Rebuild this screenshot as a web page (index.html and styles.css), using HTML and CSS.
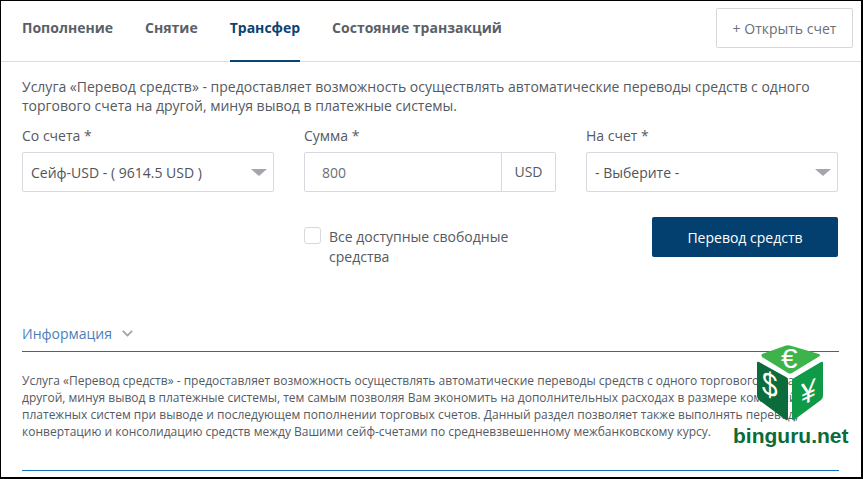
FILE: index.html
```html
<!DOCTYPE html>
<html lang="ru">
<head>
    <meta charset="UTF-8">
    <title>Трансфер</title>
    <link rel="stylesheet" href="styles.css">
</head>
<body>
    <div class="window">
        <header class="tabs-bar">
            <nav class="tabs">
                <a class="tab">Пополнение</a>
                <a class="tab">Снятие</a>
                <a class="tab active">Трансфер</a>
                <a class="tab">Состояние транзакций</a>
            </nav>
            <button class="open-btn">+ Открыть счет</button>
        </header>
        <main class="content">
            <p class="intro">Услуга «Перевод средств» - предоставляет возможность осуществлять автоматические переводы средств с одного торгового счета на другой, минуя вывод в платежные системы.</p>
            <div class="form-row">
                <div class="field">
                    <label class="field-label">Со счета *</label>
                    <div class="select"><span>Сейф-USD - ( 9614.5 USD )</span><i class="caret"></i></div>
                </div>
                <div class="field">
                    <label class="field-label">Сумма *</label>
                    <div class="amount"><span class="amount-value">800</span><span class="amount-unit">USD</span></div>
                </div>
                <div class="field">
                    <label class="field-label">На счет *</label>
                    <div class="select"><span>- Выберите -</span><i class="caret"></i></div>
                </div>
            </div>
            <div class="form-row action-row">
                <div class="field"></div>
                <div class="field check-field">
                    <span class="checkbox"></span>
                    <span class="check-label">Все доступные свободные средства</span>
                </div>
                <div class="field"><button class="submit-btn">Перевод средств</button></div>
            </div>
            <section class="info">
                <div class="info-head">
                    <span>Информация</span>
                    <svg class="chevron" width="11" height="7" viewBox="0 0 13 8"><path d="M1 1l5.500 5.500L12 1" fill="none" stroke="#98a3b0" stroke-width="2"/></svg>
                </div>
                <p class="info-text">Услуга «Перевод средств» - предоставляет возможность осуществлять автоматические переводы средств с одного торгового счета на<br>другой, минуя вывод в платежные системы, тем самым позволяя Вам экономить на дополнительных расходах в размере комиссий<br>платежных систем при выводе и последующем пополнении торговых счетов. Данный раздел позволяет также выполнять перевод,<br>конвертацию и консолидацию средств между Вашими сейф-счетами по средневзвешенному межбанковскому курсу.</p>
            </section>
        </main>
        <div class="watermark">
            <svg class="cube" width="70" height="80" viewBox="0 0 70 80">
                <path d="M6 11L30 2.500Q32 2 34 2.500L63 11Q65 12 63 13.500L36 30Q34 31 32 30L6 14Q5 12 6 11Z" fill="#3cb44b"/>
                <path d="M1 20Q1 18 3 19L30 34Q32 35 32 37V75Q32 78 30 77L3 57Q1 55 1 53Z" fill="#0b6b3a"/>
                <path d="M67 20Q67 18 65 19L38 35Q36 36 36 38V75Q36 78 38 77L65 57Q67 55 67 53Z" fill="#0f9a48"/>
                <text class="cube-sign" transform="translate(25 25) scale(1.100 1)" font-size="27">€</text>
                <text class="cube-sign" transform="translate(6 50) skewY(20) scale(.85 1)" font-size="33">$</text>
                <text class="cube-sign" transform="translate(45 63) skewY(-25) scale(.85 1)" font-size="31" font-weight="700">¥</text>
            </svg>
            <div class="brand">binguru.net</div>
        </div>
    </div>
</body>
</html>
```

FILE: styles.css
```css
* {
    box-sizing: border-box;
}
html, body {
    margin: 0;
    height: 100%;
    background: #fff;
}
body {
    font-family: 'Open Sans', sans-serif;
    color: #555a62;
}
.window {
    position: relative;
    width: 863px;
    height: 479px;
    border-top: 1px solid #000;
    border-left: 1px solid #000;
    border-right: 2px solid #000;
    border-bottom: 2px solid #000;
    overflow: hidden;
}
.tabs-bar {
    display: flex;
    justify-content: space-between;
    height: 61px;
    padding: 7px 8px 0 21px;
    border-bottom: 1px solid #ddd;
}
.tabs {
    display: flex;
    gap: 32px;
    margin-top: -7px;
}
.tab {
    display: block;
    height: 61px;
    padding-top: 17px;
    font-size: 14px;
    line-height: 20px;
    font-weight: 700;
    color: #5a5f68;
}
.tab.active {
    color: #0b4373;
    border-bottom: 2px solid #0b4373;
}
.open-btn {
    width: 137px;
    height: 40px;
    background: #fff;
    border: 1px solid #d8d8dc;
    border-radius: 2px;
    font-family: inherit;
    font-size: 14px;
    color: #6a6f78;
}
.content {
    padding: 15px 23px 0 21px;
}
.intro {
    margin: 0;
    font-size: 14px;
    line-height: 19px;
}
.form-row {
    display: grid;
    grid-template-columns: 252px 252px 252px;
    column-gap: 30px;
    width: 816px;
    margin-top: 11px;
}
.field-label {
    display: block;
    font-size: 14px;
    line-height: 19px;
    margin-bottom: 7px;
}
.select, .amount {
    display: flex;
    align-items: center;
    height: 40px;
    background: #fff;
    border: 1px solid #d8d8e0;
    border-radius: 2px;
    font-size: 14px;
}
.select {
    justify-content: space-between;
    padding: 0 6px 0 8px;
    color: #4f545c;
}
.caret {
    width: 0;
    height: 0;
    margin-top: 1px;
    border-left: 8px solid transparent;
    border-right: 8px solid transparent;
    border-top: 7px solid #a4a6ac;
}
.amount-value {
    flex: 1;
    padding-left: 17px;
    color: #6a6f78;
}
.amount-unit {
    width: 54px;
    height: 100%;
    border-left: 1px solid #d8d8e0;
    text-align: center;
    line-height: 38px;
}
.action-row {
    margin-top: 25px;
}
.check-field {
    display: flex;
    gap: 8px;
    padding-top: 10px;
}
.checkbox {
    flex: none;
    width: 17px;
    height: 17px;
    border: 1px solid #d8d8e0;
    border-radius: 3px;
}
.check-label {
    width: 200px;
    font-size: 14px;
    line-height: 20px;
}
.submit-btn {
    display: block;
    width: 186px;
    height: 40px;
    margin-left: 66px;
    background: #03406f;
    border: none;
    border-radius: 2px;
    font-family: inherit;
    font-size: 14px;
    font-weight: 400;
    color: #fff;
}
.info {
    width: 817px;
    height: 153px;
    margin-top: 51px;
    border-bottom: 1px solid #1b6fb8;
}
.info-head {
    display: flex;
    align-items: center;
    gap: 10px;
    height: 34px;
    padding-bottom: 2px;
    border-bottom: 1px solid #1b6fb8;
    font-size: 14px;
    color: #4a7fbb;
}
.info-text {
    margin: 20px 0 0;
    font-size: 12px;
    line-height: 17px;
    white-space: nowrap;
}
.watermark {
    position: absolute;
    left: 732px;
    top: 342px;
    width: 118px;
}
.cube {
    display: block;
    margin-left: 23px;
}
.cube-sign {
    fill: #fff;
    font-family: 'Liberation Sans', sans-serif;
    font-weight: 400;
}
.brand {
    margin-top: 1px;
    font-family: 'Liberation Sans', sans-serif;
    font-size: 21px;
    line-height: 24px;
    font-weight: 700;
    color: #0b6b3a;
    white-space: nowrap;
}
```
